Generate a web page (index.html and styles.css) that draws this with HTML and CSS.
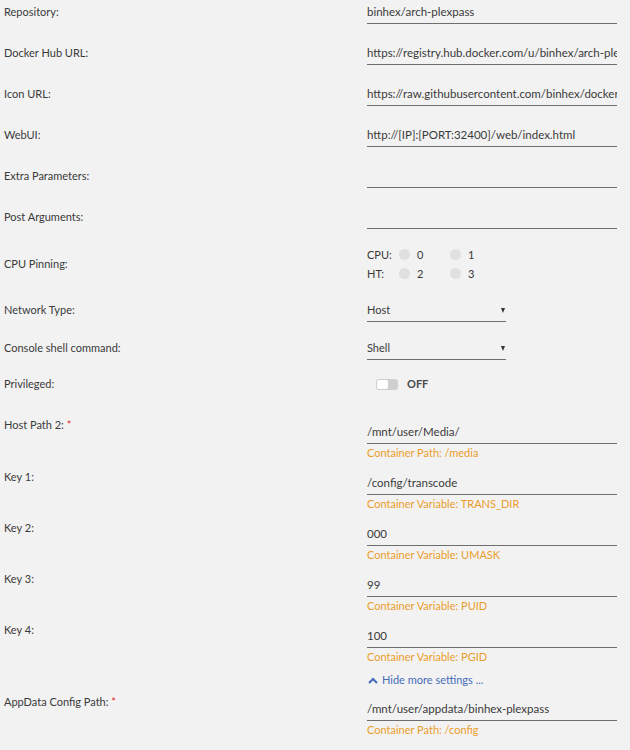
FILE: index.html
```html
<!DOCTYPE html>
<html>
<head>
<meta charset="utf-8">
<link rel="stylesheet" href="styles.css">
</head>
<body>
<div class="form">
  <div class="row text">
    <div class="label">Repository:</div>
    <div class="field"><div class="input">binhex/arch-plexpass</div></div>
  </div>
  <div class="row text">
    <div class="label">Docker Hub URL:</div>
    <div class="field"><div class="input">https://registry.hub.docker.com/u/binhex/arch-plexpass/</div></div>
  </div>
  <div class="row text">
    <div class="label">Icon URL:</div>
    <div class="field"><div class="input">https://raw.githubusercontent.com/binhex/docker-templates/master/binhex/images/plex-icon.png</div></div>
  </div>
  <div class="row text">
    <div class="label">WebUI:</div>
    <div class="field"><div class="input">http://[IP]:[PORT:32400]/web/index.html</div></div>
  </div>
  <div class="row text">
    <div class="label">Extra Parameters:</div>
    <div class="field"><div class="input"></div></div>
  </div>
  <div class="row text last">
    <div class="label">Post Arguments:</div>
    <div class="field"><div class="input"></div></div>
  </div>

  <div class="row cpu">
    <div class="label">CPU Pinning:</div>
    <div class="field">
      <div class="pins">
        <span class="pin-label">CPU:</span>
        <span class="pin"><span class="dot"></span>0</span>
        <span class="pin"><span class="dot"></span>1</span>
      </div>
      <div class="pins">
        <span class="pin-label">HT:</span>
        <span class="pin"><span class="dot"></span>2</span>
        <span class="pin"><span class="dot"></span>3</span>
      </div>
    </div>
  </div>

  <div class="row sel network">
    <div class="label">Network Type:</div>
    <div class="field"><div class="select">Host<span class="arrow"></span></div></div>
  </div>
  <div class="row sel console">
    <div class="label">Console shell command:</div>
    <div class="field"><div class="select">Shell<span class="arrow"></span></div></div>
  </div>

  <div class="row priv">
    <div class="label">Privileged:</div>
    <div class="field">
      <div class="switch"><span class="track"><span class="knob"></span></span><span class="off">OFF</span></div>
    </div>
  </div>

  <div class="row cfg host">
    <div class="label">Host Path 2: <span class="req">*</span></div>
    <div class="field">
      <div class="input">/mnt/user/Media/</div>
      <div class="hint">Container Path: /media</div>
    </div>
  </div>
  <div class="row cfg">
    <div class="label">Key 1:</div>
    <div class="field">
      <div class="input">/config/transcode</div>
      <div class="hint">Container Variable: TRANS_DIR</div>
    </div>
  </div>
  <div class="row cfg">
    <div class="label">Key 2:</div>
    <div class="field">
      <div class="input">000</div>
      <div class="hint">Container Variable: UMASK</div>
    </div>
  </div>
  <div class="row cfg">
    <div class="label">Key 3:</div>
    <div class="field">
      <div class="input">99</div>
      <div class="hint">Container Variable: PUID</div>
    </div>
  </div>
  <div class="row cfg key4">
    <div class="label">Key 4:</div>
    <div class="field">
      <div class="input">100</div>
      <div class="hint">Container Variable: PGID</div>
    </div>
  </div>

  <div class="row toggle-more">
    <div class="label"></div>
    <div class="field">
      <a class="more"><svg class="chev" width="10" height="7" viewBox="0 0 10 7"><path d="M1 6 L5 2 L9 6" fill="none" stroke="#486dba" stroke-width="2.2"/></svg>Hide more settings ...</a>
    </div>
  </div>

  <div class="row cfg host appdata">
    <div class="label">AppData Config Path: <span class="req">*</span></div>
    <div class="field">
      <div class="input">/mnt/user/appdata/binhex-plexpass</div>
      <div class="hint">Container Path: /config</div>
    </div>
  </div>
</div>
</body>
</html>
```

FILE: styles.css
```css
html, body {
  margin: 0;
  padding: 0;
}

body {
  background: #f2f2f2;
  color: #3a3a3a;
  font-family: Lato, "Liberation Sans", sans-serif;
  font-size: 11px;
  line-height: 14px;
}

.form {
  padding: 5px 0 0 4px;
}

.row {
  display: grid;
  grid-template-columns: 363px 250px;
}

.label {
  white-space: nowrap;
}

.req {
  color: #e22b2b;
}

/* plain text inputs */
.input {
  height: 14px;
  padding-bottom: 4px;
  border-bottom: 1px solid #6e6e6e;
  font-size: 11.5px;
  white-space: nowrap;
  overflow: hidden;
}

.row.text {
  margin-bottom: 22px;
}

.row.text.last {
  margin-bottom: 16px;
}

/* cpu pinning */
.row.cpu {
  align-items: center;
  margin-bottom: 20px;
}

.pins {
  display: flex;
  align-items: center;
  height: 19px;
}

.pin-label {
  width: 32px;
}

.pin {
  display: flex;
  align-items: center;
  width: 51px;
}

.dot {
  width: 11px;
  height: 11px;
  border-radius: 50%;
  background: #e0e0e0;
  margin-right: 7px;
}

/* selects */
.select {
  position: relative;
  width: 139px;
  height: 14px;
  padding-bottom: 4px;
  border-bottom: 1px solid #6e6e6e;
}

.arrow {
  position: absolute;
  right: 1px;
  top: 5px;
  width: 0;
  height: 0;
  border-left: 2.5px solid transparent;
  border-right: 2.5px solid transparent;
  border-top: 5px solid #333;
}

.row.network {
  margin-bottom: 19px;
}

.row.console {
  margin-bottom: 17px;
}

/* privileged switch */
.row.priv {
  align-items: center;
  margin-bottom: 27px;
}

.switch {
  display: flex;
  align-items: center;
  padding-left: 9px;
}

.track {
  display: flex;
  width: 22px;
  height: 11px;
  border-radius: 3px;
  background: #cfcfcf;
  box-sizing: border-box;
  padding: 1px;
}

.knob {
  width: 11px;
  height: 9px;
  border-radius: 2px;
  background: #ffffff;
}

.off {
  margin-left: 9px;
  font-weight: bold;
  color: #4a4a4a;
}

/* config rows */
.row.cfg {
  margin-bottom: 10px;
}

.row.cfg .field {
  padding-top: 6px;
}

.row.cfg.host .field {
  padding-top: 7px;
}

.hint {
  margin-top: 2px;
  color: #eb9d2b;
  white-space: nowrap;
}

.row.key4 {
  margin-bottom: 9px;
}

.row.toggle-more {
  margin-bottom: 8px;
}

.more {
  display: flex;
  align-items: center;
  color: #486dba;
}

.chev {
  margin-left: 1px;
  margin-right: 4px;
}
```
